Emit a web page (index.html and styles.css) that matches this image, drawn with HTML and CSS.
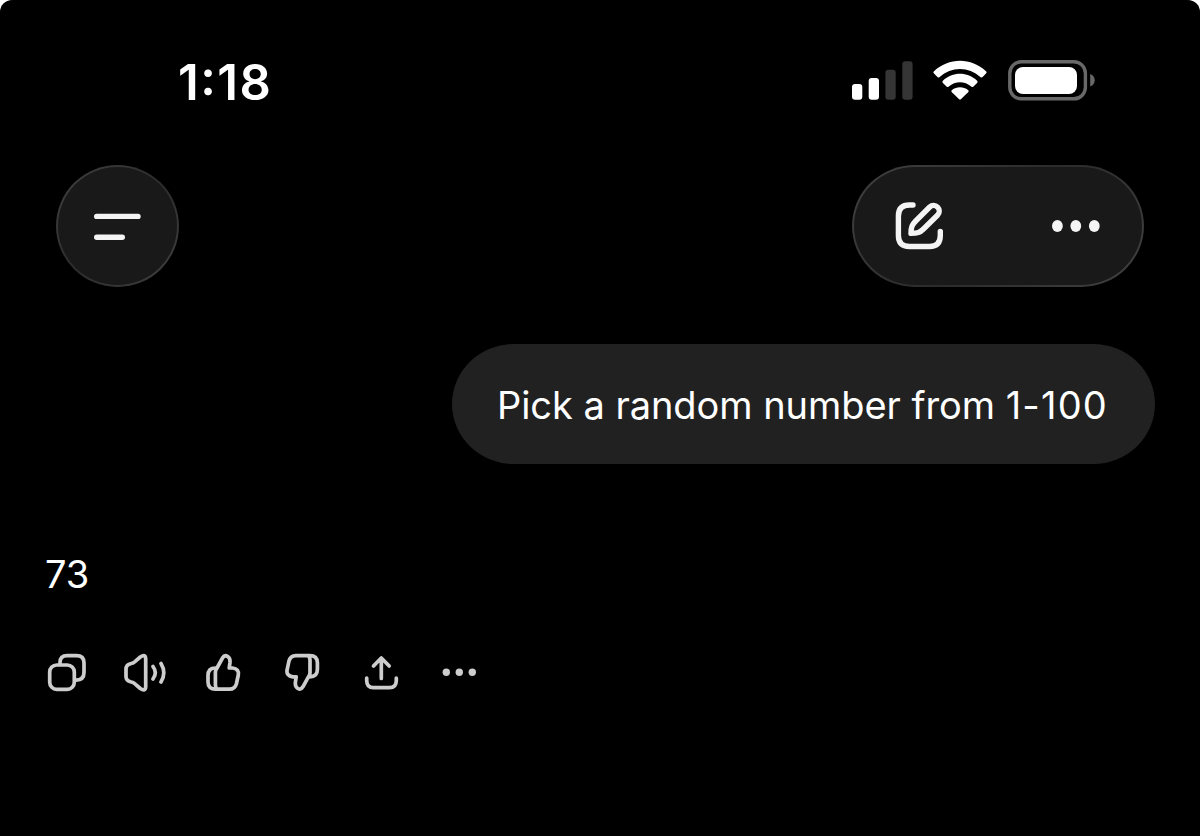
FILE: index.html
```
<!DOCTYPE html>
<html lang="en">
<head>
    <meta charset="UTF-8">
    <meta name="viewport" content="width=device-width, initial-scale=1.0">
    <title>Chat</title>
    <link rel="stylesheet" href="styles.css">
</head>
<body>
    <div class="screen">
        <div class="status-bar">
            <div class="time">1:18</div>
            <div class="status-icons">
                <svg class="signal" width="62" height="40" viewBox="0 0 62 40">
                    <rect x="1" y="24" width="10.3" height="15.7" rx="3" fill="#fff"/>
                    <rect x="17.7" y="18" width="10.3" height="21.7" rx="3" fill="#fff"/>
                    <rect x="34.4" y="9.7" width="10.3" height="30" rx="3" fill="#353535"/>
                    <rect x="51.3" y="1.3" width="10.3" height="38.4" rx="3" fill="#353535"/>
                </svg>
                <svg class="wifi" width="54" height="40" viewBox="0 0 54 40" fill="#fff">
                    <path d="M1 11.3C15.5-2.8 38.5-2.8 53 11.3Q54.2 12.4 53 13.6L49.6 17Q48.5 18 47.3 16.9C35.800 6.200 18.200 6.200 6.700 16.900Q5.500 18 4.400 17L1 13.600Q-.2 12.400 1 11.300Z"/>
                    <path d="M9.900 20.700C19.500 11.500 34.500 11.500 44.100 20.700Q45.200 21.800 44.100 22.900L40.500 26.400Q39.400 27.500 38.200 26.400C31.800 20.700 22.200 20.700 15.800 26.400Q14.600 27.500 13.500 26.400L9.900 22.900Q8.800 21.800 9.900 20.700Z"/>
                    <path d="M19 30C23.500 26.200 30.500 26.200 35 30Q36.200 31.100 35.100 32.200L28.100 39.100Q27 40.100 25.900 39.100L18.900 32.200Q17.800 31.100 19 30Z"/>
                </svg>
                <svg class="battery" width="88" height="41" viewBox="0 0 88 41">
                    <rect x="1.800" y="1.800" width="75.600" height="37" rx="11.500" fill="none" stroke="#686868" stroke-width="3.400"/>
                    <rect x="7" y="7" width="62" height="27" rx="8" fill="#fff"/>
                    <path d="M82.200 14C88.200 16 88.200 24.500 82.200 26.500Z" fill="#686868"/>
                </svg>
            </div>
        </div>

        <div class="nav-bar">
            <div class="menu-btn">
                <svg width="48" height="28" viewBox="0 0 48 28" stroke="#f4f4f4" stroke-width="5.400" stroke-linecap="round">
                    <path d="M3.700 4.400H45M3.700 25.200H29.300"/>
                </svg>
            </div>
            <div class="nav-actions">
                <svg width="50" height="50" viewBox="0 0 50 50" fill="none" stroke="#f4f4f4" stroke-width="5.400" stroke-linecap="round" stroke-linejoin="round">
                    <path d="M19 4H15.500Q4.400 4 4.400 15V34.500Q4.400 45.500 15.500 45.500H35.500Q46.300 45.500 46.300 34.500V30.500"/>
                    <path d="M17 32.400C17 26 18.200 23.500 21.700 20L35.700 6A5.660 5.660 0 0 1 43.700 14L29.500 28C26 31.500 23.500 32.400 17 32.400Z"/>
                </svg>
                <svg width="50" height="14" viewBox="0 0 50 14" fill="#f4f4f4">
                    <ellipse cx="6.400" cy="7" rx="5.400" ry="6"/>
                    <ellipse cx="24.800" cy="7" rx="5.400" ry="6"/>
                    <ellipse cx="43.300" cy="7" rx="5.400" ry="6"/>
                </svg>
            </div>
        </div>

        <div class="user-message">Pick a random number from <span class="range">1-100</span></div>

        <div class="reply">73</div>

        <div class="reply-actions">
            <!-- copy -->
            <svg width="39" height="40" viewBox="0 0 39 40">
                <rect x="2.700" y="13" width="24.600" height="24.300" rx="7"/>
                <path d="M13 12.500V10.500Q13 3.700 20 3.700H29.500Q37 3.700 37 11V20.500Q37 28 29 28.200"/>
            </svg>
            <!-- read aloud -->
            <svg width="44" height="40" viewBox="0 0 44 40">
                <path d="M7.500 11.700Q10.500 11.200 12.500 9.200L17.300 5Q22.700 1.500 22.700 7V34.500Q22.700 40 17.300 36.500L12.500 32.300Q10.500 30.300 7.500 29.800Q3 28.500 3 24.500V17Q3 13 7.500 11.700Z"/>
                <path d="M30 14.500Q34.600 20.800 30 27M38 11.500Q43.600 20.800 38 30"/>
            </svg>
            <!-- good response -->
            <svg width="43" height="40" viewBox="0 0 43 40">
                <path d="M13 16L18.500 6Q20.500 2.600 23.500 4.300Q26.500 6.300 26 10.500L25.200 16H28.500Q35.400 17 34.300 23L32.500 31.500Q31 37.200 25.500 37.200H11.500Q4 37.200 4 30V23.500Q4 16 11.500 16H13ZM13 16Q11.400 18 11.400 20V33Q11.400 35.500 13 37"/>
            </svg>
            <!-- bad response -->
            <svg width="40" height="40" viewBox="0 0 40 40">
                <g transform="rotate(180 18.700 20.400)">
                    <path d="M13 16L18.500 6Q20.500 2.600 23.500 4.300Q26.500 6.300 26 10.500L25.200 16H28.500Q35.400 17 34.300 23L32.500 31.500Q31 37.200 25.500 37.200H11.500Q4 37.200 4 30V23.500Q4 16 11.500 16H13ZM13 16Q11.400 18 11.400 20V33Q11.400 35.500 13 37"/>
                </g>
            </svg>
            <!-- share -->
            <svg width="43" height="40" viewBox="0 0 43 40">
                <path d="M20.300 26.500V6.500M12.500 14L20.300 6L28.200 14M5.700 26V28.500Q5.700 35.700 12.500 35.700H28.500Q35.300 35.700 35.300 28.500V26"/>
            </svg>
            <!-- more -->
            <svg class="dots" width="36" height="40" viewBox="0 0 36 40">
                <circle cx="5.300" cy="20.300" r="3.700"/>
                <circle cx="18.300" cy="20.300" r="3.700"/>
                <circle cx="31.300" cy="20.300" r="3.700"/>
            </svg>
        </div>
    </div>
</body>
</html>
```
FILE: styles.css
```
body {
    margin: 0;
    background-color: #fff;
    font-family: Inter, "Liberation Sans", sans-serif;
    color: #fff;
}
svg {
    display: block;
    flex: none;
}
.screen {
    box-sizing: border-box;
    width: 1200px;
    height: 836px;
    background-color: #000;
    border-radius: 12px 12px 0 0;
    overflow: hidden;
    display: flex;
    flex-direction: column;
}
.status-bar {
    display: flex;
    justify-content: space-between;
    padding: 60px 104px 0 178px;
    height: 105px;
    box-sizing: border-box;
}
.time {
    font-size: 49px;
    font-weight: 600;
    line-height: 45px;
    letter-spacing: 1.500px;
    font-feature-settings: "case";
}
.status-icons {
    display: flex;
}
.wifi {
    margin: 0 21px 0 20px;
}
.nav-bar {
    display: flex;
    justify-content: space-between;
    padding: 60px 56px 0;
}
.menu-btn, .nav-actions {
    box-sizing: border-box;
    height: 122px;
    border: 2px solid transparent;
    background: linear-gradient(#191919, #191919) padding-box,
        linear-gradient(135deg, #414141, #2b2b2b 50%, #414141) border-box;
    display: flex;
    align-items: center;
}
.menu-btn {
    width: 123px;
    border-radius: 50%;
    padding-left: 35px;
}
.nav-actions {
    width: 292px;
    border-radius: 63px / 61px;
    justify-content: space-between;
    padding: 0 41px 0 40px;
}
.user-message {
    box-sizing: border-box;
    align-self: flex-end;
    width: 703px;
    height: 120px;
    margin: 57px 45px 0 0;
    padding-left: 45px;
    border-radius: 62px / 60px;
    background-color: #212121;
    font-size: 38px;
    line-height: 122px;
    letter-spacing: -0.050px;
    white-space: nowrap;
}
.range {
    letter-spacing: 1.200px;
}
.reply {
    margin: 85px 0 0 45px;
    font-size: 38px;
    line-height: 50px;
}
.reply-actions {
    display: flex;
    margin: 53px 0 0 47px;
    gap: 37px;
}
.reply-actions svg {
    fill: none;
    stroke: #cdcdcd;
    stroke-width: 3.700;
    stroke-linecap: round;
    stroke-linejoin: round;
}
.reply-actions .dots {
    fill: #cdcdcd;
    stroke: none;
}
```
